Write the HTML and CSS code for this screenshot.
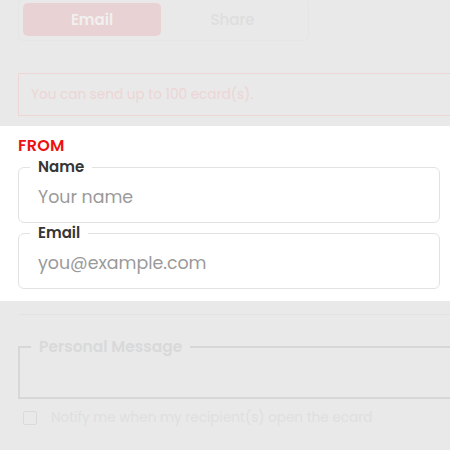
FILE: index.html
```html
<!DOCTYPE html>
<html>
<head>
<meta charset="utf-8">
<link rel="stylesheet" href="styles.css">
</head>
<body>
<div class="page">
  <div class="dim">
    <div class="tabs">
      <button class="tab tab-active">Email</button>
      <button class="tab">Share</button>
    </div>
    <div class="alert">You can send up to 100 ecard(s).</div>
  </div>

  <section class="focus">
    <h3 class="section-title">FROM</h3>
    <fieldset class="field">
      <legend>Name</legend>
      <input class="field-input" type="text" placeholder="Your name">
    </fieldset>
    <fieldset class="field">
      <legend>Email</legend>
      <input class="field-input" type="text" placeholder="you@example.com">
    </fieldset>
  </section>

  <div class="dim">
    <hr class="divider">
    <fieldset class="message">
      <legend>Personal Message</legend>
      <div class="message-body"></div>
    </fieldset>
    <label class="notify">
      <span class="checkbox"></span>
      <span>Notify me when my recipient(s) open the ecard</span>
    </label>
  </div>
</div>
</body>
</html>
```

FILE: styles.css
```css
html, body {
  margin: 0;
  padding: 0;
  background: #e9e9e9;
  overflow: hidden;
}
body {
  font-family: "Poppins", Inter, "Noto Sans", sans-serif;
}
.page {
  width: 450px;
  height: 450px;
  overflow: hidden;
}
.dim {
  padding-left: 18px;
}
.tabs {
  display: flex;
  width: 281px;
  margin-top: -2px;
  padding: 4px;
  border: 1px solid #e5e5e5;
  border-radius: 6px;
}
.tab {
  width: 138px;
  height: 33px;
  border: 0;
  border-radius: 5px;
  background: transparent;
  font-family: inherit;
  font-size: 15px;
  font-weight: 500;
  color: #dedede;
  padding: 0;
  flex: none;
}
.tab-active {
  background: #e9d2d3;
  color: #f0f0f0;
  font-weight: 600;
}
.tab + .tab {
  flex: 1;
}
.alert {
  margin-top: 32px;
  width: 450px;
  height: 41px;
  border: 1px solid #ecd6d6;
  box-sizing: content-box;
  padding: 0 0 0 12px;
  display: flex;
  align-items: center;
  font-size: 13.6px;
  color: #edd5d5;
}
.focus {
  background: #ffffff;
  margin-top: 10px;
  padding: 10px 10px 12px 18px;
}
.section-title {
  margin: 0 0 1px;
  font-size: 16px;
  line-height: 20px;
  font-weight: 600;
  color: #ee1111;
  letter-spacing: 0.2px;
}
.field {
  margin: 0;
  padding: 0 19px 3px;
  border: 1.5px solid #e2e2e2;
  border-radius: 6px;
}
.field legend {
  margin-left: -8px;
  padding: 0 8px;
  font-size: 15px;
  line-height: 20px;
  font-weight: 600;
  color: #363636;
}
.field-input {
  display: block;
  width: 100%;
  height: 39px;
  margin: 0 0 3px;
  border: 0;
  padding: 0;
  outline: none;
  background: transparent;
  font-family: inherit;
  font-size: 17.4px;
  color: #333;
}
.field-input::placeholder {
  color: #9a9a9a;
}
.divider {
  margin: 13px 0 0;
  border: 0;
  border-top: 1px solid #e3e3e3;
  width: 450px;
}
.message {
  margin: 22px 0 0;
  width: 450px;
  padding: 0 19px;
  border: 2px solid #d7d7d7;
  border-radius: 0;
  box-sizing: content-box;
}
.message legend {
  margin-left: -8px;
  padding: 0 8px;
  font-size: 15.5px;
  line-height: 20px;
  font-weight: 600;
  color: #d9d9d9;
}
.message-body {
  height: 40px;
}
.notify {
  display: flex;
  align-items: center;
  gap: 14px;
  margin-top: 9px;
  padding-left: 5px;
  font-size: 13.6px;
  color: #dfdfdf;
}
.checkbox {
  width: 12px;
  height: 12px;
  border: 1px solid #dadada;
  border-radius: 2px;
  flex: none;
}
```
